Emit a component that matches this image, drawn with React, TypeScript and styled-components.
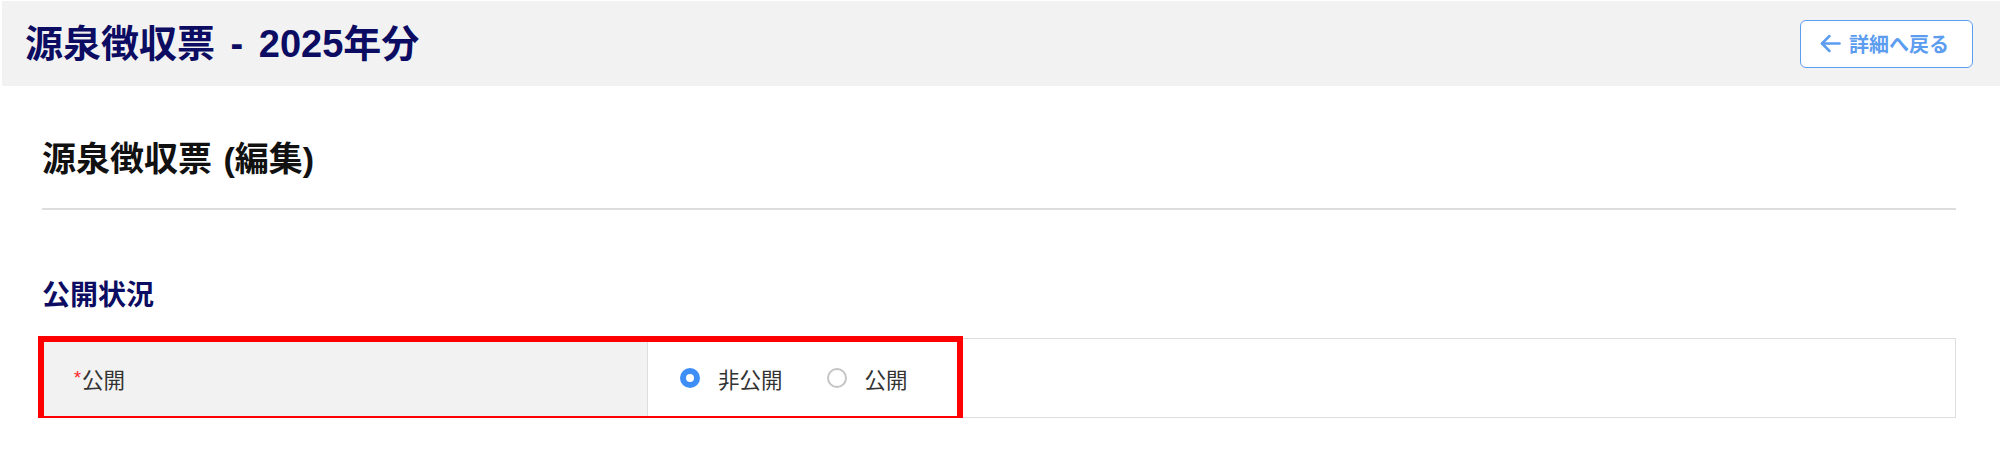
import React from "react";
import styled, { createGlobalStyle } from "styled-components";

const GlobalStyle = createGlobalStyle`
  html, body { margin: 0; padding: 0; background: #ffffff; }
  body {
    font-family: "Liberation Sans", "Noto Sans CJK JP", sans-serif;
    color: #333333;
  }
`;

const Page = styled.div`
  width: 2000px;
`;

const Header = styled.header`
  margin: 1px 0 0 2px;
  height: 85px;
  background: #f2f2f2;
  display: flex;
  align-items: center;
  justify-content: space-between;
  padding: 0 27px 0 23px;
  box-sizing: border-box;
`;

const PageTitle = styled.h1`
  margin: 0;
  font-size: 38px;
  font-weight: 700;
  color: #0c0c62;
  line-height: 1;
  word-spacing: 5px;
`;

const BackButton = styled.button`
  display: flex;
  align-items: center;
  gap: 8px;
  height: 48px;
  width: 173px;
  padding: 0 0 0 19px;
  box-sizing: border-box;
  background: #ffffff;
  border: 1.5px solid #5c9df0;
  border-radius: 6px;
  color: #5c9df0;
  font-family: inherit;
  font-size: 20px;
  font-weight: 700;
  cursor: pointer;
`;

const Content = styled.main`
  padding: 0 44px 0 42px;
`;

const SectionTitle = styled.h2`
  margin: 0;
  padding: 53px 0 28px;
  font-size: 34px;
  font-weight: 700;
  color: #111111;
  line-height: 1.2;
  border-bottom: 2px solid #dddddd;
  word-spacing: 2px;
`;

const GroupTitle = styled.h3`
  margin: 0;
  padding: 69px 0 0;
  font-size: 28px;
  font-weight: 700;
  color: #0c0c62;
  line-height: 1.2;
`;

const FormTable = styled.div`
  position: relative;
  margin-top: 26px;
  display: grid;
  grid-template-columns: 605px 1fr;
  height: 80px;
  border: 1px solid #dddddd;
  box-sizing: border-box;
`;

const LabelCell = styled.div`
  background: #f2f2f2;
  border-right: 1px solid #dddddd;
  display: flex;
  align-items: center;
  padding-left: 31px;
  font-size: 21.5px;
  color: #333333;
`;

const Required = styled.span`
  color: #ff2020;
  font-size: 18px;
  margin-right: 1px;
  align-self: flex-start;
  margin-top: 29px;
`;

const ValueCell = styled.div`
  display: flex;
  align-items: center;
  padding-left: 32px;
  gap: 44px;
`;

const RadioLabel = styled.label`
  display: flex;
  align-items: center;
  gap: 18px;
  font-size: 21.5px;
  color: #333333;
`;

const RadioDot = styled.span<{ $checked?: boolean }>`
  width: 20px;
  height: 20px;
  border-radius: 50%;
  box-sizing: border-box;
  background: ${(p) => (p.$checked ? "#3d8ef7" : "#ffffff")};
  border: ${(p) => (p.$checked ? "none" : "2px solid #c4c4c4")};
  display: flex;
  align-items: center;
  justify-content: center;
  &::after {
    content: "";
    display: ${(p) => (p.$checked ? "block" : "none")};
    width: 8px;
    height: 8px;
    border-radius: 50%;
    background: #ffffff;
  }
`;

const Highlight = styled.div`
  position: absolute;
  left: -5px;
  top: -3px;
  width: 925px;
  height: 86px;
  border: 6px solid #ff0000;
  box-sizing: border-box;
  pointer-events: none;
`;

const ArrowIcon = () => (
  <svg width="21" height="19" viewBox="0 0 21 19" fill="none" stroke="currentColor" strokeWidth="2.5" strokeLinecap="round" strokeLinejoin="round">
    <path d="M19.5 9.5H2" />
    <path d="M9.5 2L2 9.5L9.5 17" />
  </svg>
);

export default function App() {
  return (
    <Page>
      <GlobalStyle />
      <Header>
        <PageTitle>源泉徴収票 - 2025年分</PageTitle>
        <BackButton type="button">
          <ArrowIcon />
          詳細へ戻る
        </BackButton>
      </Header>
      <Content>
        <SectionTitle>源泉徴収票 (編集)</SectionTitle>
        <GroupTitle>公開状況</GroupTitle>
        <FormTable>
          <LabelCell>
            <Required>*</Required>公開
          </LabelCell>
          <ValueCell>
            <RadioLabel>
              <RadioDot $checked />
              非公開
            </RadioLabel>
            <RadioLabel>
              <RadioDot />
              公開
            </RadioLabel>
          </ValueCell>
          <Highlight />
        </FormTable>
      </Content>
    </Page>
  );
}
